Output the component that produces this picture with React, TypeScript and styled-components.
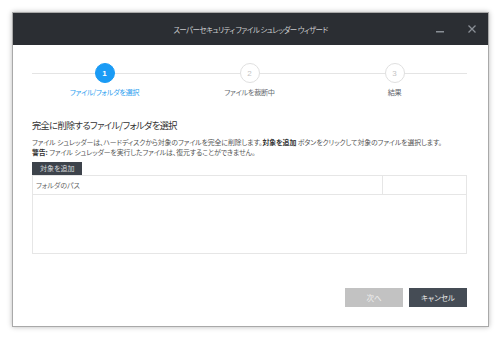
import React from "react";
import styled, { createGlobalStyle } from "styled-components";

const Global = createGlobalStyle`
  html, body { margin: 0; padding: 0; background: #ffffff; }
  body { font-family: "Noto Sans CJK JP", "Noto Sans", sans-serif; }
  * { box-sizing: border-box; }
`;

const Page = styled.div`
  width: 500px;
  height: 340px;
  padding: 12px 11px 13px 12px;
  display: flex;
`;

const Window = styled.div`
  flex: 1;
  display: flex;
  flex-direction: column;
  border: 1px solid #a9a9a9;
  background: #ffffff;
  box-shadow: 0 0 5px rgba(0, 0, 0, 0.28);
  font-feature-settings: "palt";
`;

const TitleBar = styled.div`
  height: 32px;
  flex: none;
  background: #2b2e33;
  display: grid;
  grid-template-columns: 1fr auto 1fr;
  align-items: center;
`;

const Title = styled.div`
  grid-column: 2;
  color: #c9cacc;
  font-size: 7.5px;
  letter-spacing: -0.6px;
`;

const WinButtons = styled.div`
  grid-column: 3;
  justify-self: end;
  display: flex;
  align-items: center;
  gap: 18px;
  padding-right: 9px;
`;

const WinButton = styled.div`
  width: 14px;
  height: 14px;
  display: flex;
  align-items: center;
  justify-content: center;
`;

const Body = styled.div`
  flex: 1;
  display: flex;
  flex-direction: column;
  padding: 18px 21px 19px 19px;
`;

const Stepper = styled.div`
  position: relative;
  display: grid;
  grid-template-columns: repeat(3, 1fr);
  &::before {
    content: "";
    position: absolute;
    left: 0;
    right: 0;
    top: 10px;
    height: 1px;
    background: #e4e4e4;
  }
`;

const Step = styled.div`
  position: relative;
  display: flex;
  flex-direction: column;
  align-items: center;
  gap: 3px;
`;

const Circle = styled.div<{ $active?: boolean }>`
  width: 20px;
  height: 20px;
  border-radius: 50%;
  display: flex;
  align-items: center;
  justify-content: center;
  font-family: "Liberation Sans", Arial, sans-serif;
  font-size: 8px;
  font-weight: ${(p) => (p.$active ? 700 : 400)};
  background: ${(p) => (p.$active ? "#1a9bf5" : "#ffffff")};
  color: ${(p) => (p.$active ? "#ffffff" : "#c4c4c4")};
  border: 1px solid ${(p) => (p.$active ? "#1a9bf5" : "#e0e0e0")};
`;

const StepLabel = styled.div<{ $active?: boolean }>`
  font-size: 7.2px;
  letter-spacing: -0.35px;
  color: ${(p) => (p.$active ? "#2a9ef0" : "#666a70")};
  line-height: 12px;
`;

const Heading = styled.div`
  margin-top: 20px;
  font-size: 9.2px;
  letter-spacing: -0.6px;
  color: #333;
  line-height: 14px;
`;

const Desc = styled.div`
  margin-top: 5px;
  font-size: 6.9px;
  letter-spacing: -0.08px;
  color: #555;
  line-height: 10px;
  b { color: #333; font-weight: 700; }
`;

const AddButton = styled.div`
  margin-top: 5px;
  align-self: flex-start;
  background: #3d434b;
  color: #d8dadc;
  font-size: 7px;
  height: 13px;
  line-height: 13px;
  padding: 0 8px;
`;

const Table = styled.div`
  height: 79px;
  border: 1px solid #e6e6e6;
  display: flex;
  flex-direction: column;
`;

const HeaderRow = styled.div`
  height: 19px;
  display: grid;
  grid-template-columns: 1fr 84px;
  border-bottom: 1px solid #e6e6e6;
`;

const HeaderCell = styled.div`
  font-size: 7px;
  color: #666;
  display: flex;
  align-items: center;
  padding-left: 3px;
  & + & { border-left: 1px solid #e6e6e6; }
`;

const Footer = styled.div`
  margin-top: auto;
  display: flex;
  justify-content: flex-end;
  gap: 6px;
`;

const FooterButton = styled.div<{ $disabled?: boolean }>`
  width: 58px;
  height: 19px;
  display: flex;
  align-items: center;
  justify-content: center;
  font-size: 7.5px;
  background: ${(p) => (p.$disabled ? "#c2c2c2" : "#454c55")};
  color: ${(p) => (p.$disabled ? "#f0f0f0" : "#e8e8e8")};
`;

export default function App() {
  return (
    <>
      <Global />
      <Page>
        <Window>
          <TitleBar>
            <Title>スーパーセキュリティ ファイル シュレッダー ウィザード</Title>
            <WinButtons>
              <WinButton>
                <svg width="10" height="10" viewBox="0 0 10 10">
                  <rect x="1" y="7" width="8" height="1.5" fill="#8a8f96" />
                </svg>
              </WinButton>
              <WinButton>
                <svg width="10" height="10" viewBox="0 0 10 10">
                  <path d="M1.5 1.5 L8.5 8.5 M8.5 1.5 L1.5 8.5" stroke="#8a8f96" strokeWidth="1.3" />
                </svg>
              </WinButton>
            </WinButtons>
          </TitleBar>
          <Body>
            <Stepper>
              <Step>
                <Circle $active>1</Circle>
                <StepLabel $active>ファイル/フォルダを選択</StepLabel>
              </Step>
              <Step>
                <Circle>2</Circle>
                <StepLabel>ファイルを裁断中</StepLabel>
              </Step>
              <Step>
                <Circle>3</Circle>
                <StepLabel>結果</StepLabel>
              </Step>
            </Stepper>
            <Heading>完全に削除するファイル/フォルダを選択</Heading>
            <Desc>
              ファイル シュレッダーは、ハードディスクから対象のファイルを完全に削除します。<b>対象を追加</b> ボタンをクリックして対象のファイルを選択します。
              <br />
              <b>警告:</b> ファイル シュレッダーを実行したファイルは、復元することができません。
            </Desc>
            <AddButton>対象を追加</AddButton>
            <Table>
              <HeaderRow>
                <HeaderCell>フォルダのパス</HeaderCell>
                <HeaderCell />
              </HeaderRow>
            </Table>
            <Footer>
              <FooterButton $disabled>次へ</FooterButton>
              <FooterButton>キャンセル</FooterButton>
            </Footer>
          </Body>
        </Window>
      </Page>
    </>
  );
}
